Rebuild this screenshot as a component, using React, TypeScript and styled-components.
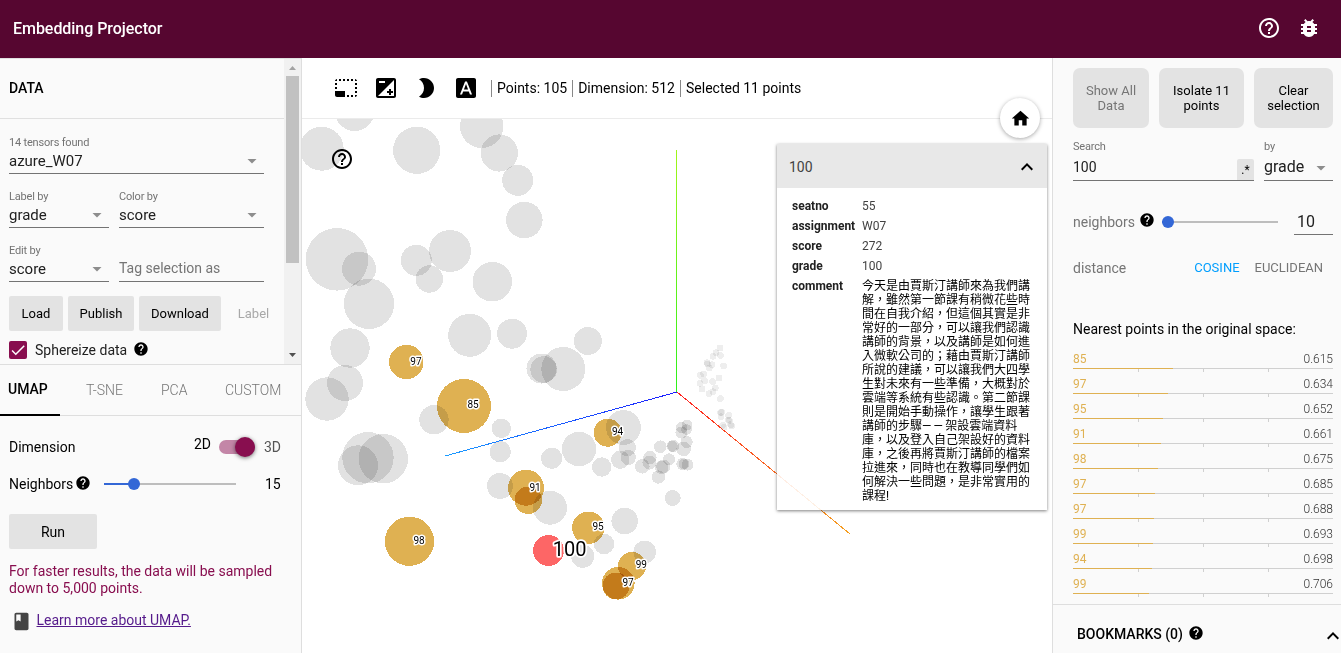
import React from "react";
import styled, { createGlobalStyle, css } from "styled-components";
import {
  MdHelpOutline,
  MdBugReport,
  MdHelp,
  MdHome,
  MdPhotoSizeSelectSmall,
  MdBrightness2,
  MdFontDownload,
  MdClass,
  MdKeyboardArrowUp,
  MdCheck,
} from "react-icons/md";

const GlobalStyle = createGlobalStyle`
  *, *::before, *::after { box-sizing: border-box; }
  html, body { margin: 0; padding: 0; overflow: hidden; }
  body { font-family: Roboto, "Noto Sans CJK TC", sans-serif; font-size: 14px; line-height: 20px; color: #212121; }
  svg { display: block; flex: none; }
`;

/* ---------- frame ---------- */

const Page = styled.div`
  width: 1341px;
  height: 653px;
  display: flex;
  flex-direction: column;
  overflow: hidden;
  background: #fff;
`;

const Header = styled.header`
  flex: none;
  height: 58px;
  padding: 0 20px 0 13px;
  display: flex;
  align-items: center;
  justify-content: space-between;
  background: #560630;
  color: #fff;
`;

const Title = styled.div`
  font-size: 16px;
  font-weight: 500;
  letter-spacing: -0.04px;
`;

const HeaderIcons = styled.div`
  display: flex;
  gap: 16px;
  margin-top: -2px;
`;

const Columns = styled.div`
  flex: 1;
  min-height: 0;
  display: flex;
`;

/* ---------- left pane ---------- */

const LeftPane = styled.aside`
  flex: none;
  width: 302px;
  background: #fafafa;
  border-right: 1px solid #dedede;
  display: flex;
  flex-direction: column;
`;

const DataPanel = styled.section`
  flex: none;
  height: 307px;
  display: flex;
  border-top: 1px solid #e0e0e0;
  border-bottom: 1px solid #dedede;
`;

const DataContent = styled.div`
  width: 284px;
`;

const DataHeading = styled.h2`
  margin: 0;
  height: 60px;
  padding: 0 0 2px 9px;
  display: flex;
  align-items: center;
  border-bottom: 1px solid #e0e0e0;
  font-size: 14px;
  font-weight: 500;
  color: #000;
`;

const DataBody = styled.div`
  padding: 16px 13px 0 9px;
`;

const Scrollbar = styled.div`
  width: 17px;
  display: flex;
  flex-direction: column;
  align-items: center;
  background: #f1f1f1;
`;

const ScrollArrow = styled.div<{ $down?: boolean }>`
  width: 7px;
  height: 4px;
  margin: ${(p) => (p.$down ? "auto 0 7px" : "7px 0 6px")};
  background: ${(p) => (p.$down ? "#505050" : "#a3a3a3")};
  clip-path: ${(p) => (p.$down ? "polygon(0 0, 100% 0, 50% 100%)" : "polygon(50% 0, 100% 100%, 0 100%)")};
`;

const ScrollThumb = styled.div`
  width: 13px;
  height: 187px;
  background: #c1c1c1;
`;

const FieldRow = styled.div<{ $gap?: number }>`
  display: flex;
  gap: 10px;
  margin-bottom: ${(p) => p.$gap ?? 15}px;
`;

const Field = styled.div<{ $w: number }>`
  width: ${(p) => p.$w}px;
  height: 39px;
  border-bottom: 1px solid #737373;
`;

const FieldLabel = styled.div`
  height: 14px;
  margin-bottom: 2px;
  font-size: 11px;
  line-height: 16px;
  letter-spacing: -0.18px;
  color: #737373;
`;

const FieldValue = styled.div<{ $size?: number }>`
  height: 20px;
  display: flex;
  align-items: center;
  justify-content: space-between;
  font-size: ${(p) => p.$size ?? 15}px;
  padding-right: 7px;
  color: #212121;
`;

const Caret = styled.div`
  width: 10px;
  height: 5px;
  background: #8d8d8d;
  clip-path: polygon(0 0, 100% 0, 50% 100%);
`;

const TagInput = styled.div`
  padding-top: 15px;
  line-height: 20px;
  color: #757575;
`;

const ButtonRow = styled.div`
  display: flex;
  gap: 5px;
  margin-bottom: 10px;
`;

const Button = styled.button<{ $w: number; $ghost?: boolean; $size?: number }>`
  flex: none;
  width: ${(p) => p.$w}px;
  height: 35px;
  padding: 0;
  border: 0;
  border-radius: 2px;
  background: ${(p) => (p.$ghost ? "transparent" : "#e3e3e3")};
  color: ${(p) => (p.$ghost ? "#a8a8a8" : "#000")};
  font: 400 ${(p) => p.$size ?? 13}px/20px Roboto, sans-serif;
`;

const CheckRow = styled.div`
  display: flex;
  align-items: center;
  height: 18px;
`;

const Checkbox = styled.div`
  width: 18px;
  height: 18px;
  margin-right: 8px;
  display: flex;
  align-items: center;
  justify-content: center;
  border-radius: 2px;
  background: #880e4f;
  color: #fff;
`;

const HelpBadge = styled(MdHelp)<{ $left?: number }>`
  width: 16px;
  height: 16px;
  margin: -3px 0 0 ${(p) => p.$left ?? 0}px;
  color: #000;
`;

const Tabs = styled.nav`
  flex: none;
  height: 51px;
  display: flex;
  border-bottom: 1px solid #dedede;
`;

const Tab = styled.div<{ $w: number; $active?: boolean }>`
  width: ${(p) => p.$w}px;
  height: 51px;
  white-space: nowrap;
  ${(p) =>
    p.$active
      ? css`
          margin-right: 26px;
          padding: 14px 0 0 8px;
          border-bottom: 2px solid #000;
          font-weight: 500;
          color: #000;
        `
      : css`
          padding-top: 15px;
          font-weight: 300;
          color: #757575;
        `}
`;

const Settings = styled.section`
  padding: 21px 20px 0 9px;
  color: #000;
`;

const SettingRow = styled.div<{ $mb: number }>`
  height: 20px;
  display: flex;
  align-items: center;
  margin-bottom: ${(p) => p.$mb}px;
`;

const Caption = styled.span<{ $w?: number; $muted?: boolean; $raise?: number }>`
  width: ${(p) => (p.$w ? `${p.$w}px` : "auto")};
  margin-top: ${(p) => -(p.$raise ?? 0)}px;
  color: ${(p) => (p.$muted ? "#555" : "inherit")};
`;

const Switch = styled.div`
  width: 36px;
  height: 14px;
  margin: 0 9px 0 8px;
  display: flex;
  align-items: center;
  justify-content: flex-end;
  border-radius: 7px;
  background: #c386a7;
`;

const SwitchKnob = styled.div`
  flex: none;
  width: 20px;
  height: 20px;
  border-radius: 50%;
  background: #880e4f;
  box-shadow: 0 1px 4px rgba(0, 0, 0, 0.55);
`;

const Slider = styled.div<{ $w: number; $fill: number }>`
  width: ${(p) => p.$w}px;
  height: 12px;
  display: flex;
  align-items: center;
  background: linear-gradient(
      to right,
      #3367d6 ${(p) => p.$fill}px,
      #bdbdbd ${(p) => p.$fill}px
    )
    0 5px / 100% 2px no-repeat;
`;

const SliderKnob = styled.div<{ $at: number }>`
  width: 12px;
  height: 12px;
  margin-left: ${(p) => p.$at}px;
  border-radius: 50%;
  background: #3367d6;
`;

const Notice = styled.p`
  margin: 14px 0 12px;
  width: 275px;
  font-size: 14px;
  line-height: 17px;
  color: #880e4f;
`;

const LearnMore = styled.div`
  display: flex;
  align-items: center;
  gap: 5px;
  padding-left: 2px;
  color: #444;
  svg {
    margin: 2px 0 -2px -0.5px;
  }
  a {
    color: #551a8b;
    text-decoration: underline;
  }
`;

/* ---------- center ---------- */

const Main = styled.main`
  flex: none;
  width: 750px;
  display: flex;
  flex-direction: column;
`;

const Toolbar = styled.div`
  flex: none;
  height: 61px;
  padding-left: 32px;
  display: flex;
  align-items: center;
  border-bottom: 1px solid #ebebeb;
  color: #000;
`;

const ToolIcons = styled.div`
  display: flex;
  gap: 16px;
  margin-right: 13px;
`;

const Stat = styled.div`
  display: flex;
  align-items: center;
  height: 20px;
  padding-left: 6px;
  margin-right: 5px;
  background: linear-gradient(#888, #888) 0 2px / 1px 17px no-repeat;
  white-space: nowrap;
`;

const Canvas = styled.div`
  flex: 1;
  position: relative;
`;

const Overlay = styled.div<{ $x: number; $y: number }>`
  position: absolute;
  left: ${(p) => p.$x}px;
  top: ${(p) => p.$y}px;
  color: #000;
`;

const HomeButton = styled.div`
  width: 40px;
  height: 40px;
  display: flex;
  align-items: center;
  justify-content: center;
  border-radius: 50%;
  background: #fff;
  box-shadow: 0 1px 4px rgba(0, 0, 0, 0.35);
`;

const Card = styled.div`
  width: 270px;
  height: 366px;
  background: rgba(255, 255, 255, 0.88);
  box-shadow: 0 1px 3px rgba(0, 0, 0, 0.5);
`;

const CardHead = styled.div`
  height: 44px;
  padding: 2px 8px 0 12px;
  display: flex;
  align-items: center;
  justify-content: space-between;
  background: #e8e8e8;
  color: #424242;
  svg {
    color: #000;
  }
`;

const CardTable = styled.div`
  padding: 10px 0 0 15px;
  display: grid;
  grid-template-columns: 70px 170px;
  font-size: 12px;
  line-height: 16px;
  row-gap: 4px;
`;

const Key = styled.div`
  font-weight: 700;
  color: #212121;
`;

const Value = styled.div`
  color: #424242;
`;

const Comment = styled.div`
  padding-top: 1px;
  line-height: 14px;
  font-family: Roboto, "Noto Sans CJK TC", sans-serif;
  color: #000;
  white-space: nowrap;
`;

const Dashes = styled.span`
  letter-spacing: 2.2px;
`;

/* ---------- right pane ---------- */

const RightPane = styled.aside`
  flex: 1;
  display: flex;
  flex-direction: column;
  background: #fafafa;
  border-left: 1px solid #dedede;
`;

const Inspector = styled.section`
  height: 546px;
  padding: 10px 8px 0 20px;
`;

const SelectionButtons = styled.div`
  display: flex;
  gap: 10px;
`;

const BigButton = styled.button<{ $w: number; $off?: boolean }>`
  width: ${(p) => p.$w}px;
  height: 60px;
  padding: 0 10px;
  border: 0;
  border-radius: 7px;
  background: #e3e3e3;
  color: ${(p) => (p.$off ? "#757575" : "#000")};
  font: 400 13px/15px Roboto, sans-serif;
`;

const SearchRow = styled.div`
  margin-top: 11px;
  height: 42px;
  display: flex;
  gap: 10px;
`;

const SearchField = styled.div<{ $w: number }>`
  width: ${(p) => p.$w}px;
  height: 42px;
  border-bottom: 1px solid #737373;
`;

const SearchLine = styled.div`
  height: 24px;
  display: flex;
  align-items: center;
  justify-content: space-between;
`;

const RegexToggle = styled.div`
  width: 17px;
  height: 21px;
  margin-top: 5px;
  display: flex;
  align-items: center;
  justify-content: center;
  border-radius: 2px 2px 0 0;
  background: #e3e3e3;
  font-size: 12px;
  color: #000;
`;

const ByCaret = styled(Caret)`
  margin: 2px 7px 0 0;
`;

const NeighborRow = styled.div`
  margin-top: 28px;
  height: 25px;
  display: flex;
  align-items: center;
  color: #757575;
`;

const NumberInput = styled.div`
  align-self: flex-start;
  flex: none;
  width: 39px;
  height: 26px;
  margin-left: auto;
  padding-left: 3px;
  line-height: 25px;
  font-size: 16px;
  border-bottom: 1px solid #737373;
  color: #212121;
`;

const DistanceRow = styled.div`
  margin-top: 24px;
  display: flex;
  align-items: center;
  color: #757575;
`;

const Metric = styled.span<{ $on?: boolean; $left: number }>`
  margin-left: ${(p) => p.$left}px;
  font-size: 13px;
  color: ${(p) => (p.$on ? "#009efe" : "#757575")};
`;

const ListTitle = styled.div`
  margin: 41px 0 12px;
  line-height: 20px;
  color: #000;
`;

const NearItem = styled.div`
  height: 25px;
`;

const NearText = styled.div`
  display: flex;
  justify-content: space-between;
  height: 17px;
  padding-bottom: 1px;
  font-size: 12px;
  font-weight: 300;
  line-height: 16px;
  color: #333;
  span:first-child {
    font-weight: 400;
    color: #dfb152;
  }
`;

const NearBar = styled.div`
  height: 1px;
  background: #d0d0d0;
`;

const NearFill = styled.div`
  height: 1px;
  background: #dfb152;
`;

const Ticks = styled.div`
  display: flex;
  justify-content: space-between;
  padding: 0 64px 0 65px;
  i {
    width: 1px;
    height: 3px;
    background: #d0d0d0;
  }
`;

const Bookmarks = styled.section`
  flex: 1;
  display: flex;
  align-items: flex-start;
  padding: 19px 0 0 24px;
  margin-right: -4px;
  border-top: 1px solid #dedede;
  font-weight: 500;
  color: #000;
`;

const BookmarkTitle = styled.div`
  display: flex;
  align-items: center;
  flex: 1;
`;

/* ---------- data ---------- */

type Dot = [number, number, number];

const greyDots: Dot[] = [
  [321.7, 148.7, 22], [354.7, 111.3, 19.7], [416.7, 150.3, 23.6], [481.7, 126.3, 21.7],
  [499.3, 153, 18.6], [517.7, 180.3, 15.5], [524.3, 220, 18.3], [337, 259.3, 31.3],
  [359, 268.7, 17], [369, 303.8, 25.2], [416.3, 260.3, 15.5], [450, 251, 21],
  [429.3, 279, 13.7], [492.3, 281.7, 19.8], [350, 348, 19.7], [345, 383, 18],
  [327, 399, 21.7], [368, 457.7, 25.7], [383.3, 458.7, 24.7], [358, 465.3, 20],
  [469.7, 335.3, 21.5], [512, 333.7, 15], [541.5, 368.5, 15], [543.7, 369.5, 13.3],
  [563.3, 369, 22], [587.8, 341, 14], [434, 419.7, 14.7], [501.3, 428.3, 9.7],
  [500.3, 451.7, 10.6], [551.7, 458.3, 10.6], [579, 449, 17.2], [500, 486, 13],
  [550, 507.7, 17], [623.5, 427.5, 17.5], [601.7, 467, 9.7], [627.3, 447.7, 8.7],
  [620.3, 459.7, 9.2], [628.3, 457.5, 7.6], [642.3, 466.3, 7.3], [650, 457.5, 6.7],
  [649.5, 462.5, 7], [660.3, 446.7, 6.3], [673.3, 446, 6], [672, 446.3, 5.5],
  [669, 459.3, 6], [663.3, 466.5, 7], [661.7, 467.5, 6.7], [658.3, 477, 6.7],
  [681.7, 427.7, 5.7], [687, 425, 5.3], [681.5, 432.5, 6], [686.5, 429.5, 5.3],
  [686.7, 442, 6], [683.7, 449, 7.3], [682.3, 464, 6], [684, 464, 5.5],
  [687.5, 464.7, 6], [672.7, 498, 8], [624.7, 521, 13.3], [604, 544, 10.2],
  [582.7, 556.3, 11.5], [644.7, 552, 11.3],
];

const farDots: [number, number][] = [
  [720, 348], [716, 352.7], [720.3, 355.3], [713, 356.3], [707, 362.7], [707.7, 364],
  [712, 364.7], [709.3, 368], [723.7, 366], [703.7, 374], [700.3, 375.3], [719, 378],
  [704.7, 380.7], [712.7, 381.7], [700, 383.3], [715.3, 388], [702, 389], [713, 391.7],
  [709, 393.7], [720.3, 398.7], [720.7, 412.3], [721.7, 412.3], [721, 416.7], [728.7, 415.3],
  [728.3, 420], [729.3, 420.3], [730.7, 424.7], [731.7, 426], [722.7, 425.3], [724, 427.3],
];

const goldDots: Dot[] = [
  [406.3, 362, 17.2], [464, 406, 27], [607.7, 432.7, 14], [526, 487.7, 18],
  [528.3, 500.3, 13.7], [409.5, 541.3, 24.6], [588.3, 527.7, 16.2], [632, 566, 14],
  [618.3, 583.3, 16.3], [616, 586, 13.5],
];

const pointLabels: [number, number, string][] = [
  [410.3, 365.3, "97"], [467.5, 408, "85"], [612, 435, "94"], [529.5, 491, "91"],
  [413.5, 544, "98"], [592.5, 530, "95"], [635.7, 568, "99"], [622.5, 586.4, "97"],
];

const nearest: [string, string][] = [
  ["85", "0.615"], ["97", "0.634"], ["95", "0.652"], ["91", "0.661"], ["98", "0.675"],
  ["97", "0.685"], ["97", "0.688"], ["99", "0.693"], ["94", "0.698"], ["99", "0.706"],
];

const commentLines: React.ReactNode[] = [
  "今天是由賈斯汀講師來為我們講",
  "解，雖然第一節課有稍微花些時",
  "間在自我介紹，但這個其實是非",
  "常好的一部分，可以讓我們認識",
  "講師的背景，以及講師是如何進",
  "入微軟公司的；藉由賈斯汀講師",
  "所說的建議，可以讓我們大四學",
  "生對未來有一些準備，大概對於",
  "雲端等系統有些認識。第二節課",
  "則是開始手動操作，讓學生跟著",
  <>講師的步驟<Dashes>——</Dashes>架設雲端資料</>,
  "庫，以及登入自己架設好的資料",
  "庫，之後再將賈斯汀講師的檔案",
  "拉進來，同時也在教導同學們如",
  "何解決一些問題，是非常實用的",
  "課程!",
];

/* ---------- parts ---------- */

function ExposureIcon() {
  return (
    <svg width="24" height="24" viewBox="0 0 24 24" fill="currentColor">
      <path d="M15 17v2h2v-2h2v-2h-2v-2h-2v2h-2v2h2zm5-15H4c-1.1 0-2 .9-2 2v16c0 1.1.9 2 2 2h16c1.1 0 2-.9 2-2V4c0-1.1-.9-2-2-2zM5 5h6v2H5V5zm15 15H4L20 4v16z" />
    </svg>
  );
}

const Plot = styled.svg`
  .dots {
    shape-rendering: crispEdges;
  }
  circle {
    mix-blend-mode: multiply;
  }
  .axes {
    fill: none;
    shape-rendering: crispEdges;
  }
  text {
    font-family: Roboto, sans-serif;
    fill: #000;
    stroke: #fff;
    stroke-linejoin: round;
    paint-order: stroke;
  }
`;

function Scatter() {
  return (
    <Plot width="750" height="534" viewBox="302 119 750 534">
      <defs>
        <linearGradient id="gx" gradientUnits="userSpaceOnUse" x1="677" y1="392" x2="850" y2="534">
          <stop offset="0" stopColor="#ff2020" />
          <stop offset="1" stopColor="#f5a020" />
        </linearGradient>
        <linearGradient id="gy" gradientUnits="userSpaceOnUse" x1="0" y1="392" x2="0" y2="150">
          <stop offset="0" stopColor="#2cf01a" />
          <stop offset="1" stopColor="#a0f51a" />
        </linearGradient>
        <linearGradient id="gz" gradientUnits="userSpaceOnUse" x1="677" y1="392" x2="445" y2="456">
          <stop offset="0" stopColor="#1a1aff" />
          <stop offset="1" stopColor="#1a9cff" />
        </linearGradient>
      </defs>
      <g className="dots">
        {farDots.map(([x, y], i) => (
          <circle key={i} cx={x} cy={y} r="3.4" fill="#eeeeee" />
        ))}
        {greyDots.map(([x, y, r], i) => (
          <circle key={i} cx={x} cy={y} r={r} fill="#e2e2e2" />
        ))}
        {goldDots.map(([x, y, r], i) => (
          <circle key={i} cx={x} cy={y} r={r} fill="#dfb152" />
        ))}
        <circle cx="548.5" cy="550.4" r="15.4" fill="#fd6666" />
      </g>
      <g className="axes">
        <path d="M676.5 392V150" stroke="url(#gy)" />
        <path d="M677 392L445 456" stroke="url(#gz)" />
        <path d="M677 392L850 534" stroke="url(#gx)" />
      </g>
      {pointLabels.map(([x, y, t], i) => (
        <text key={i} x={x} y={y} fontSize="10" strokeWidth="3">
          {t}
        </text>
      ))}
      <text x="552.8" y="556" fontSize="20" strokeWidth="3.5">
        100
      </text>
    </Plot>
  );
}

function Select({ w, label, value }: { w: number; label: string; value: string }) {
  return (
    <Field $w={w}>
      <FieldLabel>{label}</FieldLabel>
      <FieldValue>
        {value}
        <Caret />
      </FieldValue>
    </Field>
  );
}

export default function App() {
  return (
    <>
      <GlobalStyle />
      <Page>
        <Header>
          <Title>Embedding Projector</Title>
          <HeaderIcons>
            <MdHelpOutline size={24} />
            <MdBugReport size={24} />
          </HeaderIcons>
        </Header>
        <Columns>
          <LeftPane>
            <DataPanel>
              <DataContent>
                <DataHeading>DATA</DataHeading>
                <DataBody>
                  <FieldRow>
                    <Select w={255} label="14 tensors found" value="azure_W07" />
                  </FieldRow>
                  <FieldRow>
                    <Select w={100} label="Label by" value="grade" />
                    <Select w={145} label="Color by" value="score" />
                  </FieldRow>
                  <FieldRow $gap={14}>
                    <Select w={100} label="Edit by" value="score" />
                    <Field $w={145}>
                      <TagInput>Tag selection as</TagInput>
                    </Field>
                  </FieldRow>
                  <ButtonRow>
                    <Button $w={54}>Load</Button>
                    <Button $w={66}>Publish</Button>
                    <Button $w={82}>Download</Button>
                    <Button $w={55} $ghost>
                      Label
                    </Button>
                  </ButtonRow>
                  <CheckRow>
                    <Checkbox>
                      <MdCheck size={18} />
                    </Checkbox>
                    Sphereize data
                    <HelpBadge $left={5.5} />
                  </CheckRow>
                </DataBody>
              </DataContent>
              <Scrollbar>
                <ScrollArrow />
                <ScrollThumb />
                <ScrollArrow $down />
              </Scrollbar>
            </DataPanel>
            <Tabs>
              <Tab $w={60} $active>
                UMAP
              </Tab>
              <Tab $w={75}>T-SNE</Tab>
              <Tab $w={64}>PCA</Tab>
              <Tab $w={60}>CUSTOM</Tab>
            </Tabs>
            <Settings>
              <SettingRow $mb={17}>
                <Caption $w={185}>Dimension</Caption>
                <Caption $raise={6}>2D</Caption>
                <Switch>
                  <SwitchKnob />
                </Switch>
                <Caption $muted>3D</Caption>
              </SettingRow>
              <SettingRow $mb={20}>
                <Caption $w={66}>Neighbors</Caption>
                <HelpBadge />
                <Caption $w={13} />
                <Slider $w={132} $fill={30}>
                  <SliderKnob $at={24} />
                </Slider>
                <Caption $w={29} />
                <Caption>15</Caption>
              </SettingRow>
              <Button $w={88} $size={14}>
                Run
              </Button>
              <Notice>For faster results, the data will be sampled down to 5,000 points.</Notice>
              <LearnMore>
                <MdClass size={21} />
                <a>Learn more about UMAP.</a>
              </LearnMore>
            </Settings>
          </LeftPane>

          <Main>
            <Toolbar>
              <ToolIcons>
                <MdPhotoSizeSelectSmall size={24} />
                <ExposureIcon />
                <MdBrightness2 size={24} />
                <MdFontDownload size={24} />
              </ToolIcons>
              <Stat>Points: 105</Stat>
              <Stat>Dimension: 512</Stat>
              <Stat>Selected 11 points</Stat>
            </Toolbar>
            <Canvas>
              <Scatter />
              <Overlay $x={28} $y={28}>
                <MdHelpOutline size={24} />
              </Overlay>
              <Overlay $x={698} $y={-21}>
                <HomeButton>
                  <MdHome size={21} />
                </HomeButton>
              </Overlay>
              <Overlay $x={475} $y={25}>
                <Card>
                  <CardHead>
                    100
                    <MdKeyboardArrowUp size={24} />
                  </CardHead>
                  <CardTable>
                    <Key>seatno</Key>
                    <Value>55</Value>
                    <Key>assignment</Key>
                    <Value>W07</Value>
                    <Key>score</Key>
                    <Value>272</Value>
                    <Key>grade</Key>
                    <Value>100</Value>
                    <Key>comment</Key>
                    <Comment lang="zh-TW">
                      {commentLines.map((line, i) => (
                        <div key={i}>{line}</div>
                      ))}
                    </Comment>
                  </CardTable>
                </Card>
              </Overlay>
            </Canvas>
          </Main>

          <RightPane>
            <Inspector>
              <SelectionButtons>
                <BigButton $w={76} $off>
                  Show All Data
                </BigButton>
                <BigButton $w={85}>Isolate 11 points</BigButton>
                <BigButton $w={79}>Clear selection</BigButton>
              </SelectionButtons>
              <SearchRow>
                <SearchField $w={181}>
                  <FieldLabel>Search</FieldLabel>
                  <SearchLine>
                    100
                    <RegexToggle>.*</RegexToggle>
                  </SearchLine>
                </SearchField>
                <SearchField $w={69}>
                  <FieldLabel>by</FieldLabel>
                  <SearchLine>
                    <FieldValue $size={16}>grade</FieldValue>
                    <ByCaret />
                  </SearchLine>
                </SearchField>
              </SearchRow>
              <NeighborRow>
                <Caption $w={65}>neighbors</Caption>
                <HelpBadge $left={0.5} />
                <Caption $w={7.5} />
                <Slider $w={116} $fill={6}>
                  <SliderKnob $at={0} />
                </Slider>
                <NumberInput>10</NumberInput>
              </NeighborRow>
              <DistanceRow>
                distance
                <Metric $on $left={68}>
                  COSINE
                </Metric>
                <Metric $left={15}>EUCLIDEAN</Metric>
              </DistanceRow>
              <ListTitle>Nearest points in the original space:</ListTitle>
              {nearest.map(([name, d], i) => (
                <NearItem key={i}>
                  <NearText>
                    <span>{name}</span>
                    <span>{d}</span>
                  </NearText>
                  <NearBar>
                    <NearFill style={{ width: (1 - Number(d)) * 260 }} />
                  </NearBar>
                  <Ticks>
                    <i />
                    <i />
                    <i />
                  </Ticks>
                </NearItem>
              ))}
            </Inspector>
            <Bookmarks>
              <BookmarkTitle>
                BOOKMARKS (0)
                <HelpBadge $left={5} />
              </BookmarkTitle>
              <MdKeyboardArrowUp size={24} />
            </Bookmarks>
          </RightPane>
        </Columns>
      </Page>
    </>
  );
}
